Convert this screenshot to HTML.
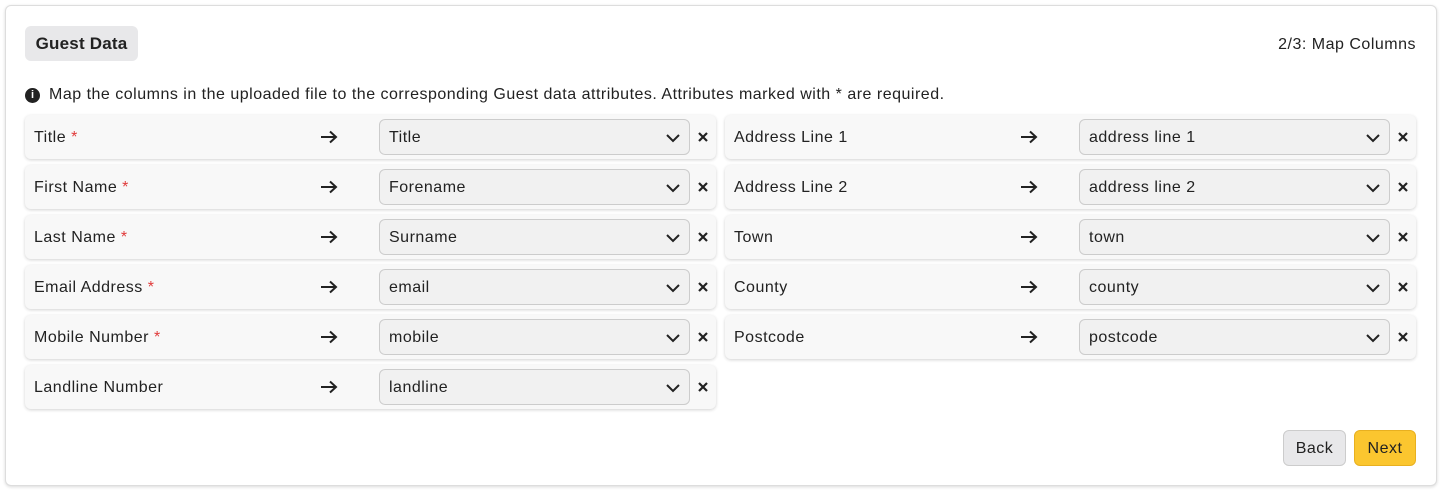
<!DOCTYPE html>
<html><head><style>
*{box-sizing:border-box;margin:0;padding:0}
body{width:1444px;height:493px;background:#fff;font-family:"Liberation Sans",sans-serif;color:#222;position:relative;overflow:hidden;letter-spacing:0.5px}
.card{position:absolute;left:5px;top:5px;width:1432px;height:481px;border:1px solid #ddd;border-radius:6px;box-shadow:0 1px 3px rgba(0,0,0,.15);background:#fff}
.pill{position:absolute;left:25px;top:26px;width:113px;height:35px;background:#e8e8ea;border-radius:6px;font-weight:bold;font-size:17px;line-height:36px;text-align:center;color:#222;letter-spacing:0.2px}
.step{position:absolute;right:28px;top:36px;font-size:16px}
.info{position:absolute;left:25px;top:86px;font-size:16px;display:flex;align-items:center}
.info i{display:inline-block;width:15px;height:15px;border-radius:50%;background:#222;color:#fff;font-size:11px;font-weight:bold;font-style:normal;text-align:center;line-height:15px;margin-right:9px;letter-spacing:0}
.row{position:absolute;height:44px;width:691px;background:#f8f8f8;border-radius:6px;box-shadow:0 1px 3px rgba(0,0,0,.18);font-size:16px}
.row .lbl{position:absolute;left:9px;top:14px}
.row .lbl b{color:#e03a3a;font-weight:normal}
.row .arr{position:absolute;left:295px;top:15px}
.row .sel{position:absolute;left:354px;top:4px;width:311px;height:36px;border:1px solid #ccc;border-radius:6px;background:#f1f1f1;padding-left:9px;line-height:36px}
.row .sel svg{position:absolute;right:8px;top:12px}
.row .x{position:absolute;left:672px;top:16px}
.btn{position:absolute;top:430px;height:36px;border-radius:6px;font-size:16px;line-height:36px;text-align:center}
</style></head><body>
<div class="card"></div>
<div class="pill">Guest Data</div>
<div class="step">2/3: Map Columns</div>
<div class="info"><i>i</i>Map the columns in the uploaded file to the corresponding Guest data attributes. Attributes marked with * are required.</div>

<div class="row" style="left:25px;top:115px"><span class="lbl">Title <b>*</b></span><svg class="arr" width="18" height="14"><path d="M1 7h15M10 1.5l6 5.5-6 5.5" stroke="#222" stroke-width="2" fill="none"/></svg><div class="sel">Title<svg width="16" height="12"><path d="M2 3l6 6 6-6" stroke="#222" stroke-width="2" fill="none"/></svg></div><svg class="x" width="12" height="12"><path d="M2 2l8 8M10 2l-8 8" stroke="#222" stroke-width="2.2"/></svg></div>
<div class="row" style="left:25px;top:165px"><span class="lbl">First Name <b>*</b></span><svg class="arr" width="18" height="14"><path d="M1 7h15M10 1.5l6 5.5-6 5.5" stroke="#222" stroke-width="2" fill="none"/></svg><div class="sel">Forename<svg width="16" height="12"><path d="M2 3l6 6 6-6" stroke="#222" stroke-width="2" fill="none"/></svg></div><svg class="x" width="12" height="12"><path d="M2 2l8 8M10 2l-8 8" stroke="#222" stroke-width="2.2"/></svg></div>
<div class="row" style="left:25px;top:215px"><span class="lbl">Last Name <b>*</b></span><svg class="arr" width="18" height="14"><path d="M1 7h15M10 1.5l6 5.5-6 5.5" stroke="#222" stroke-width="2" fill="none"/></svg><div class="sel">Surname<svg width="16" height="12"><path d="M2 3l6 6 6-6" stroke="#222" stroke-width="2" fill="none"/></svg></div><svg class="x" width="12" height="12"><path d="M2 2l8 8M10 2l-8 8" stroke="#222" stroke-width="2.2"/></svg></div>
<div class="row" style="left:25px;top:265px"><span class="lbl">Email Address <b>*</b></span><svg class="arr" width="18" height="14"><path d="M1 7h15M10 1.5l6 5.5-6 5.5" stroke="#222" stroke-width="2" fill="none"/></svg><div class="sel">email<svg width="16" height="12"><path d="M2 3l6 6 6-6" stroke="#222" stroke-width="2" fill="none"/></svg></div><svg class="x" width="12" height="12"><path d="M2 2l8 8M10 2l-8 8" stroke="#222" stroke-width="2.2"/></svg></div>
<div class="row" style="left:25px;top:315px"><span class="lbl">Mobile Number <b>*</b></span><svg class="arr" width="18" height="14"><path d="M1 7h15M10 1.5l6 5.5-6 5.5" stroke="#222" stroke-width="2" fill="none"/></svg><div class="sel">mobile<svg width="16" height="12"><path d="M2 3l6 6 6-6" stroke="#222" stroke-width="2" fill="none"/></svg></div><svg class="x" width="12" height="12"><path d="M2 2l8 8M10 2l-8 8" stroke="#222" stroke-width="2.2"/></svg></div>
<div class="row" style="left:25px;top:365px"><span class="lbl">Landline Number</span><svg class="arr" width="18" height="14"><path d="M1 7h15M10 1.5l6 5.5-6 5.5" stroke="#222" stroke-width="2" fill="none"/></svg><div class="sel">landline<svg width="16" height="12"><path d="M2 3l6 6 6-6" stroke="#222" stroke-width="2" fill="none"/></svg></div><svg class="x" width="12" height="12"><path d="M2 2l8 8M10 2l-8 8" stroke="#222" stroke-width="2.2"/></svg></div>

<div class="row" style="left:725px;top:115px"><span class="lbl">Address Line 1</span><svg class="arr" width="18" height="14"><path d="M1 7h15M10 1.5l6 5.5-6 5.5" stroke="#222" stroke-width="2" fill="none"/></svg><div class="sel">address line 1<svg width="16" height="12"><path d="M2 3l6 6 6-6" stroke="#222" stroke-width="2" fill="none"/></svg></div><svg class="x" width="12" height="12"><path d="M2 2l8 8M10 2l-8 8" stroke="#222" stroke-width="2.2"/></svg></div>
<div class="row" style="left:725px;top:165px"><span class="lbl">Address Line 2</span><svg class="arr" width="18" height="14"><path d="M1 7h15M10 1.5l6 5.5-6 5.5" stroke="#222" stroke-width="2" fill="none"/></svg><div class="sel">address line 2<svg width="16" height="12"><path d="M2 3l6 6 6-6" stroke="#222" stroke-width="2" fill="none"/></svg></div><svg class="x" width="12" height="12"><path d="M2 2l8 8M10 2l-8 8" stroke="#222" stroke-width="2.2"/></svg></div>
<div class="row" style="left:725px;top:215px"><span class="lbl">Town</span><svg class="arr" width="18" height="14"><path d="M1 7h15M10 1.5l6 5.5-6 5.5" stroke="#222" stroke-width="2" fill="none"/></svg><div class="sel">town<svg width="16" height="12"><path d="M2 3l6 6 6-6" stroke="#222" stroke-width="2" fill="none"/></svg></div><svg class="x" width="12" height="12"><path d="M2 2l8 8M10 2l-8 8" stroke="#222" stroke-width="2.2"/></svg></div>
<div class="row" style="left:725px;top:265px"><span class="lbl">County</span><svg class="arr" width="18" height="14"><path d="M1 7h15M10 1.5l6 5.5-6 5.5" stroke="#222" stroke-width="2" fill="none"/></svg><div class="sel">county<svg width="16" height="12"><path d="M2 3l6 6 6-6" stroke="#222" stroke-width="2" fill="none"/></svg></div><svg class="x" width="12" height="12"><path d="M2 2l8 8M10 2l-8 8" stroke="#222" stroke-width="2.2"/></svg></div>
<div class="row" style="left:725px;top:315px"><span class="lbl">Postcode</span><svg class="arr" width="18" height="14"><path d="M1 7h15M10 1.5l6 5.5-6 5.5" stroke="#222" stroke-width="2" fill="none"/></svg><div class="sel">postcode<svg width="16" height="12"><path d="M2 3l6 6 6-6" stroke="#222" stroke-width="2" fill="none"/></svg></div><svg class="x" width="12" height="12"><path d="M2 2l8 8M10 2l-8 8" stroke="#222" stroke-width="2.2"/></svg></div>

<div class="btn" style="left:1283px;width:63px;background:#e8e8ea;border:1px solid #ccc">Back</div>
<div class="btn" style="left:1354px;width:62px;background:#fbc62f;border:1px solid #e8b020">Next</div>
</body></html>
